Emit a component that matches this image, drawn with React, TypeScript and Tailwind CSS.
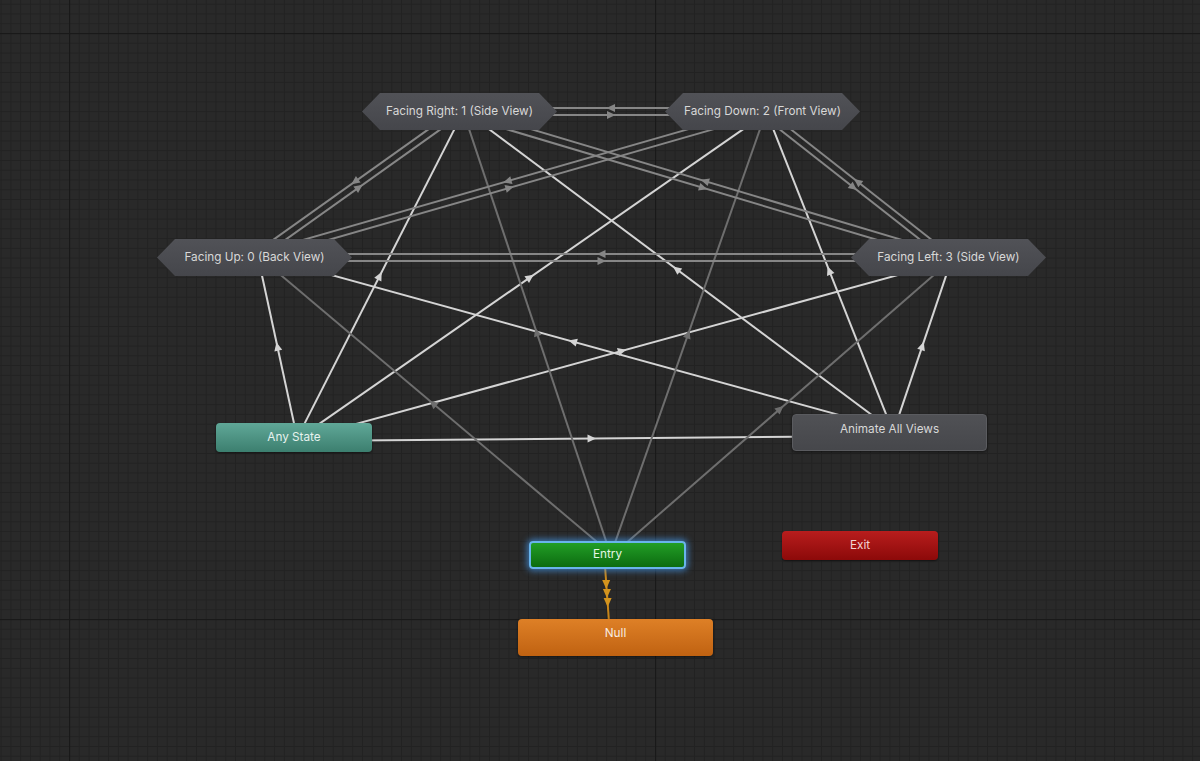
import React from "react";

type Pt = [number, number];

// Node centres on the animator canvas
const centers: Record<string, Pt> = {
  right: [459.5, 111.5],
  down: [762.5, 111.5],
  up: [254.5, 257.5],
  left: [948.5, 257.5],
  any: [293.5, 437.5],
  all: [889.5, 432.5],
  entry: [607, 555],
};

const WHITE = "#d4d4d4";
const GRAY = "#868686";
const DIM = "#6e6e6e";

const transitions: [string, string, string][] = [
  // Any State
  ["any", "up", WHITE],
  ["any", "right", WHITE],
  ["any", "down", WHITE],
  ["any", "left", WHITE],
  ["any", "all", WHITE],
  // Animate All Views
  ["all", "up", WHITE],
  ["all", "right", WHITE],
  ["all", "down", WHITE],
  ["all", "left", WHITE],
  // Entry
  ["entry", "up", DIM],
  ["entry", "right", DIM],
  ["entry", "down", DIM],
  ["entry", "left", DIM],
  // Between sub-state machines
  ["right", "down", GRAY],
  ["down", "right", GRAY],
  ["up", "left", GRAY],
  ["left", "up", GRAY],
  ["right", "up", GRAY],
  ["up", "right", GRAY],
  ["down", "up", GRAY],
  ["up", "down", GRAY],
  ["right", "left", GRAY],
  ["left", "right", GRAY],
  ["down", "left", GRAY],
  ["left", "down", GRAY],
];

function Transition({ from, to, color }: { from: string; to: string; color: string }) {
  const [ax, ay] = centers[from];
  const [bx, by] = centers[to];
  const len = Math.hypot(bx - ax, by - ay);
  const dx = (bx - ax) / len;
  const dy = (by - ay) / len;
  const nx = -dy;
  const ny = dx;
  const o = 3.5;
  const x1 = ax + nx * o;
  const y1 = ay + ny * o;
  const x2 = bx + nx * o;
  const y2 = by + ny * o;
  const mx = (x1 + x2) / 2;
  const my = (y1 + y2) / 2;
  const tip = `${mx + dx * 4.5},${my + dy * 4.5}`;
  const b1 = `${mx - dx * 4 + nx * 4},${my - dy * 4 + ny * 4}`;
  const b2 = `${mx - dx * 4 - nx * 4},${my - dy * 4 - ny * 4}`;
  return (
    <g>
      <line x1={x1} y1={y1} x2={x2} y2={y2} stroke={color} strokeWidth={2} />
      <polygon points={`${tip} ${b1} ${b2}`} fill={color} />
    </g>
  );
}

function DefaultArrow({ y }: { y: number }) {
  const x = 605 + ((y - 569) / 50) * 4;
  return <polygon points={`${x},${y + 5} ${x - 4},${y - 4} ${x + 4},${y - 4}`} fill="#d4941e" />;
}

function Canvas() {
  const minor = 586 / 60;
  return (
    <svg className="absolute inset-0" width={1200} height={761}>
      <defs>
        <pattern id="minorGrid" width={minor} height={minor} x={69 - minor * 6} y={33 - minor * 3} patternUnits="userSpaceOnUse">
          <path d={`M0.5 0 V${minor} M0 0.5 H${minor}`} stroke="#222222" strokeWidth={1} fill="none" />
        </pattern>
        <pattern id="majorGrid" width={586} height={586} x={69} y={33} patternUnits="userSpaceOnUse">
          <path d="M0.5 0 V586 M0 0.5 H586" stroke="#191919" strokeWidth={1.5} fill="none" />
        </pattern>
      </defs>
      <rect width={1200} height={761} fill="#292929" />
      <rect width={1200} height={761} fill="url(#minorGrid)" />
      <rect width={1200} height={761} fill="url(#majorGrid)" />
      {transitions.map(([f, t, c]) => (
        <Transition key={f + t} from={f} to={t} color={c} />
      ))}
      <line x1={605} y1={566} x2={609} y2={622} stroke="#c8861a" strokeWidth={2} />
      <DefaultArrow y={584} />
      <DefaultArrow y={593} />
      <DefaultArrow y={602} />
    </svg>
  );
}

const hex =
  "absolute flex items-center justify-center bg-gradient-to-b from-[#515257] to-[#45464b] text-[11.75px] text-[#d8d8d8] [clip-path:polygon(18px_0,calc(100%_-_18px)_0,100%_50%,calc(100%_-_18px)_100%,18px_100%,0_50%)]";

export default function App() {
  return (
    <div className="relative w-[1200px] h-[761px] overflow-hidden bg-[#292929] font-[Inter,'Noto_Sans',sans-serif]">
      <Canvas />

      <div className={`${hex} left-[362px] top-[93px] w-[195px] h-[37px]`}>Facing Right: 1 (Side View)</div>
      <div className={`${hex} left-[665px] top-[93px] w-[195px] h-[37px]`}>Facing Down: 2 (Front View)</div>
      <div className={`${hex} left-[157px] top-[239px] w-[195px] h-[37px]`}>Facing Up: 0 (Back View)</div>
      <div className={`${hex} left-[851px] top-[239px] w-[195px] h-[37px]`}>Facing Left: 3 (Side View)</div>

      <div className="absolute left-[216px] top-[423px] w-[156px] h-[29px] rounded-[4px] bg-gradient-to-b from-[#60a898] to-[#3c7f6f] flex items-center justify-center text-[11.75px] text-[#e6f2ee] shadow-[0_1px_2px_rgba(0,0,0,0.5)]">
        Any State
      </div>

      <div className="absolute left-[792px] top-[414px] w-[195px] h-[37px] rounded-[4px] bg-gradient-to-b from-[#505155] to-[#46474b] border border-[#5a5b5f] flex justify-center pt-[6px] text-[11.75px] text-[#d8d8d8] shadow-[0_1px_3px_rgba(0,0,0,0.5)]">
        Animate All Views
      </div>

      <div className="absolute left-[529px] top-[541px] w-[157px] h-[28px] rounded-[4px] bg-gradient-to-b from-[#229e26] to-[#0c6c10] border-2 border-[#69b4ec] shadow-[0_0_6px_2px_rgba(70,150,230,0.7)] flex items-center justify-center text-[11.75px] text-[#e6f6e6]">
        Entry
      </div>

      <div className="absolute left-[782px] top-[531px] w-[156px] h-[29px] rounded-[4px] bg-gradient-to-b from-[#b81d1d] to-[#8c0909] flex items-center justify-center text-[11.75px] text-[#f4d4d4] shadow-[0_1px_2px_rgba(0,0,0,0.5)]">
        Exit
      </div>

      <div className="absolute left-[518px] top-[619px] w-[195px] h-[37px] rounded-[4px] bg-gradient-to-b from-[#de8026] to-[#c06211] flex justify-center pt-[6px] text-[11.75px] text-[#f8ece0] shadow-[0_1px_3px_rgba(0,0,0,0.5)]">
        Null
      </div>
    </div>
  );
}
